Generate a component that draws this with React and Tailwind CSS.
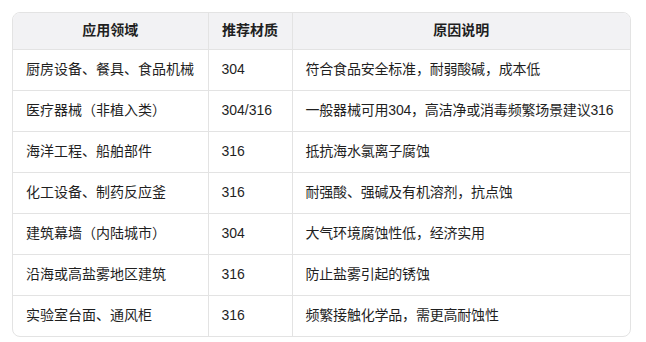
const rows = [
  ["厨房设备、餐具、食品机械", "304", "符合食品安全标准，耐弱酸碱，成本低"],
  ["医疗器械（非植入类）", "304/316", "一般器械可用304，高洁净或消毒频繁场景建议316"],
  ["海洋工程、船舶部件", "316", "抵抗海水氯离子腐蚀"],
  ["化工设备、制药反应釜", "316", "耐强酸、强碱及有机溶剂，抗点蚀"],
  ["建筑幕墙（内陆城市）", "304", "大气环境腐蚀性低，经济实用"],
  ["沿海或高盐雾地区建筑", "316", "防止盐雾引起的锈蚀"],
  ["实验室台面、通风柜", "316", "频繁接触化学品，需更高耐蚀性"],
];

export default function App() {
  return (
    <div className="min-h-[342px] w-[646px] bg-white pl-3 pt-3 font-['Liberation_Sans','Noto_Sans_CJK_SC',sans-serif] text-[14px] text-[#1f1f1f]">
      <div className="w-[619px] overflow-hidden rounded-lg border border-[#e3e3e3]">
        <table className="w-full table-fixed border-collapse">
          <colgroup>
            <col className="w-[195px]" />
            <col className="w-[84px]" />
            <col />
          </colgroup>
          <thead>
            <tr className="h-[36px] bg-[#f2f2f4]">
              <th className="border-r border-[#e3e3e3] text-center font-bold">应用领域</th>
              <th className="border-r border-[#e3e3e3] text-center font-bold">推荐材质</th>
              <th className="text-center font-bold">原因说明</th>
            </tr>
          </thead>
          <tbody>
            {rows.map((r) => (
              <tr key={r[0]} className="h-[41px] border-t border-[#e3e3e3]">
                <td className="whitespace-nowrap border-r border-[#e3e3e3] px-[13px]">{r[0]}</td>
                <td className="whitespace-nowrap border-r border-[#e3e3e3] px-[13px]">{r[1]}</td>
                <td className="whitespace-nowrap pl-[13px] pr-[6px] tracking-[-0.2px]">{r[2]}</td>
              </tr>
            ))}
          </tbody>
        </table>
      </div>
    </div>
  );
}
